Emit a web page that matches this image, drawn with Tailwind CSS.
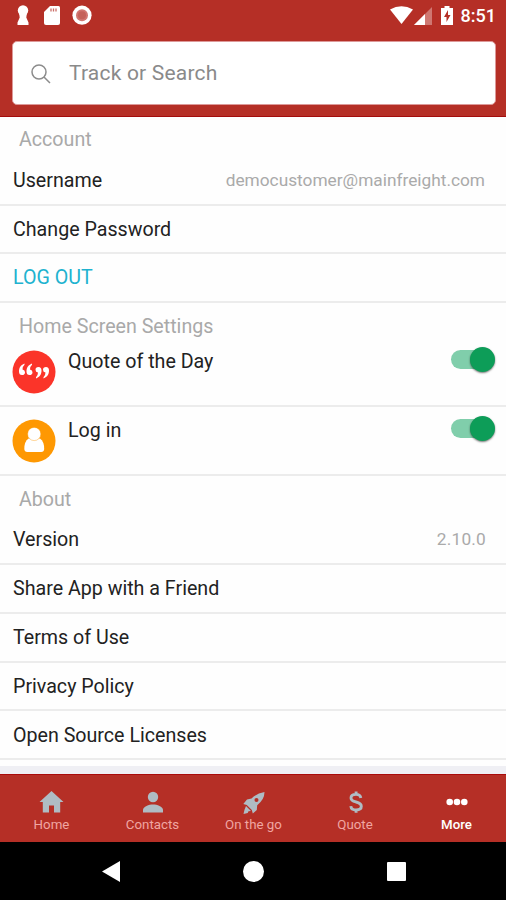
<!DOCTYPE html>
<html lang="en">
<head>
<meta charset="utf-8">
<title>Settings</title>
<script src="https://cdn.jsdelivr.net/npm/@tailwindcss/browser@4"></script>
</head>
<body class="w-[506px] h-[900px] overflow-hidden flex flex-col bg-[#fefefe] font-[Roboto,sans-serif] text-[19.650px] text-[#222]">
<header class="h-[117px] shrink-0 bg-[#b52f26] border-b border-[#a30c0c] flex flex-col">
  <div class="h-[41px] shrink-0 flex justify-between pt-[5px] pl-[17px] pr-[10px]">
    <div class="flex">
      <svg class="w-[12px] h-[20px]" viewBox="0 0 12 20" fill="#fff"><circle cx="6" cy="5.500" r="5.200"/><path d="M2 7.500h8L9.300 12.500l2.200 5V20H.5v-2.500L2.700 12.500z"/></svg>
      <svg class="w-[16px] h-[20px] ml-[15px]" viewBox="0 0 16 20"><path fill="#fff" d="M6 1h8.500Q16 1 16 2.500v15.500q0 2-2 2H2q-2 0-2-2V7z"/><path stroke="#b52f26" stroke-width="1.300" d="M7 3.500v3M9.500 3.500v3M12 3.500v3" opacity=".7"/></svg>
      <svg class="w-[20px] h-[20px] ml-[12px]" viewBox="0 0 20 20"><circle cx="10" cy="10.200" r="9.600" fill="#fff"/><circle cx="10" cy="10.200" r="6" fill="#d17670"/><circle cx="10" cy="10.200" r="4" fill="#c5625a"/></svg>
    </div>
    <div class="flex text-white">
      <svg class="w-[23px] h-[20px]" viewBox="0 0 23 20" fill="#fff"><path d="M0 4.500Q11.500-2 23 4.500L11.500 19z"/></svg>
      <svg class="w-[18px] h-[20px] ml-[1px]" viewBox="0 0 18 20"><path fill="#fff" fill-opacity=".35" d="M18 2v18H0z"/><path fill="#fff" d="M11 9v11H0z"/></svg>
      <svg class="w-[12px] h-[20px] ml-[9px]" viewBox="0 0 12 20"><path fill="#fff" d="M3.500 1h5v2H12v17H0V3h3.500z"/><path fill="#b52f26" d="M7 5L3 12h2.500v5L9.500 10H7z"/></svg>
      <span class="ml-[8px] text-[18px] leading-[22px] font-medium">8:51</span>
    </div>
  </div>
  <div class="ml-[12px] h-[64px] mr-[10px] bg-white border border-[#d99] rounded-[5px] flex items-center pl-[18px] text-[#8a8a8a] text-[21px]">
    <svg class="w-[20px] h-[20px] mt-[2px]" viewBox="0 0 20 20" fill="none" stroke="#8c8c8c" stroke-width="1.500"><circle cx="8" cy="8" r="7"/><path d="M13 13l6 6"/></svg>
    <span class="ml-[18px] mt-[2px] tracking-[.2px]">Track or Search</span>
  </div>
</header>
<main class="flex-1 min-h-0 flex flex-col">
  <h2 class="h-[39px] pl-[19px] leading-[46px] text-[#a9a9a9]">Account</h2>
  <div class="h-[50px] pt-[2px] pl-[13px] pr-[21px] flex items-center justify-between border-b-2 border-[#ececec]"><span>Username</span><span class="text-[17.300px] text-[#aaa]">democustomer@mainfreight.com</span></div>
  <div class="h-[48px] pt-[2px] pl-[13px] flex items-center border-b-2 border-[#ececec]">Change Password</div>
  <div class="h-[49px] pl-[13px] flex items-center border-b-2 border-[#ececec] text-[#20b2cf]">LOG OUT</div>
  <h2 class="h-[38px] pl-[19px] leading-[48px] text-[#a9a9a9]">Home Screen Settings</h2>
  <div class="h-[66px] pl-[12px] pr-[10px] flex border-b-2 border-[#ececec]">
    <svg class="w-[44px] h-[44px] mt-[9px]" viewBox="0 0 44 44"><circle cx="22" cy="22" r="21.500" fill="#fb3429"/><g fill="#fff"><path id="q" d="M12.500 13.500C8.500 15 7 18 7 21.500Q7 25 10 25T13 22.200Q13 19.800 10.500 19.400Q10.500 16.500 12.500 14.800z"/><use href="#q" x="7.500"/><use href="#q" transform="rotate(180 22 21)"/><use href="#q" transform="rotate(180 22 21) translate(7.500 0)"/></g></svg>
    <span class="ml-[12px] mt-[-2px] leading-[46px] h-[44px]">Quote of the Day</span>
    <div class="ml-auto mt-[6px] w-[45px] h-[25px] flex items-center"><div class="w-[40px] h-[19px] rounded-full bg-[#80ceab]"></div><div class="-ml-[21px] w-[25px] h-[25px] shrink-0 rounded-full bg-[#0d9d58] shadow-[0_1px_2px_#0008]"></div></div>
  </div>
  <div class="h-[69px] pl-[12px] pr-[10px] flex border-b-2 border-[#ececec]">
    <svg class="w-[44px] h-[44px] mt-[12px]" viewBox="0 0 44 44"><circle cx="22" cy="22" r="21.500" fill="#fe9802"/><path fill="#fff" d="M16.500 19.500h11.500q4.200 3 4.200 10.500-.2 3-3 3H15.300q-2.800 0-3-3Q12.300 22.500 16.500 19.500z"/><circle cx="22.200" cy="15" r="6.600" fill="#fff" stroke="#fe9802" stroke-width=".8" stroke-opacity=".5"/></svg>
    <span class="ml-[12px] mt-px leading-[46px] h-[44px]">Log in</span>
    <div class="ml-auto mt-[9px] w-[45px] h-[25px] flex items-center"><div class="w-[40px] h-[19px] rounded-full bg-[#80ceab]"></div><div class="-ml-[21px] w-[25px] h-[25px] shrink-0 rounded-full bg-[#0d9d58] shadow-[0_1px_2px_#0008]"></div></div>
  </div>
  <h2 class="h-[39px] pl-[19px] leading-[48px] text-[#a9a9a9]">About</h2>
  <div class="h-[50px] pt-[2px] pl-[13px] pr-[20px] flex items-center justify-between border-b-2 border-[#ececec]"><span>Version</span><span class="text-[17.300px] text-[#aaa] tracking-[.2px]">2.10.0</span></div>
  <div class="h-[49px] pl-[13px] flex items-center border-b-2 border-[#ececec]">Share App with a Friend</div>
  <div class="h-[49px] pl-[13px] flex items-center border-b-2 border-[#ececec]">Terms of Use</div>
  <div class="h-[48px] pt-[2px] pl-[13px] flex items-center border-b-2 border-[#ececec]">Privacy Policy</div>
  <div class="h-[49px] pt-[2px] pl-[13px] flex items-center border-b-2 border-[#ececec]">Open Source Licenses</div>
  <div class="mt-[6px] flex-1 bg-[#efeff4]"></div>
</main>
<nav class="h-[68px] shrink-0 bg-[#b52f26] border-t border-[#a90b0b] grid grid-cols-5 pl-px text-[13.300px] leading-[16px] text-[#f0a6a2]">
  <div class="flex flex-col items-center pt-[14px]"><svg class="w-[26px] h-[26px]" viewBox="0 0 26 26" fill="#afbcc4"><path d="M12.500 2L24.500 13h-3.300v10.500H15v-7h-5v7H3.800V13H.5z"/></svg><span class="mt-[2px]">Home</span></div>
  <div class="flex flex-col items-center pt-[14px]"><svg class="w-[26px] h-[26px]" viewBox="0 0 26 26" fill="#afbcc4"><circle cx="13" cy="8" r="5.200"/><path d="M3 23.500v-2.500C3 17.500 9 15.500 13 15.500s10 2 10 5.500V23.500z"/></svg><span class="mt-[2px]">Contacts</span></div>
  <div class="flex flex-col items-center pt-[14px]"><svg class="w-[26px] h-[26px]" viewBox="0 0 26 26" fill="#afbcc4"><path fill-rule="evenodd" d="M23.500 3Q16 4 10.500 9.500L6 10.500 2.300 15l3.500 1 5 5 1 3.500 4-3.500.4-4.800Q23.500 10.500 23.500 3zM15.500 9a2 2 0 1 1 0 4 2 2 0 0 1 0-4z"/><path d="M5 17l5 5-2.500.2-.8 1.800-4.200 1 1-4.200z"/></svg><span class="mt-[2px]">On the go</span></div>
  <div class="flex flex-col items-center pt-[14px]"><svg class="w-[26px] h-[26px]" viewBox="0 0 26 26" fill="none" stroke="#afbcc4" stroke-width="2.900"><path d="M18.800 9C18.500 6.500 16.700 5.400 14 5.400c-3 0-5 1.300-5 3.600 0 2.700 2.400 3.300 5 4s5.300 1.500 5.300 4.300c0 2.500-2.200 3.700-5.100 3.700-3.200 0-5.100-1.300-5.400-3.900M14.100 2.500v3M14.100 20.500v3.200"/></svg><span class="mt-[2px] ml-px">Quote</span></div>
  <div class="flex flex-col items-center pt-[14px] pl-[2px] text-white font-medium"><svg class="w-[26px] h-[26px]" viewBox="0 0 26 26" fill="#fff"><circle cx="5.700" cy="13" r="3.300"/><circle cx="13" cy="13" r="3.300"/><circle cx="20.300" cy="13" r="3.300"/></svg><span class="mt-[2px]">More</span></div>
</nav>
<footer class="h-[58px] shrink-0 bg-black flex pt-[19px] pl-[102px]">
  <svg class="w-[18px] h-[21px]" viewBox="0 0 18 21" fill="#fff"><path d="M18 0v21L0 10.500z"/></svg>
  <div class="ml-[123px] w-[21px] h-[21px] rounded-full bg-white"></div>
  <div class="ml-[123px] mt-px w-[19px] h-[19px] rounded-[1px] bg-white"></div>
</footer>
</body>
</html>
